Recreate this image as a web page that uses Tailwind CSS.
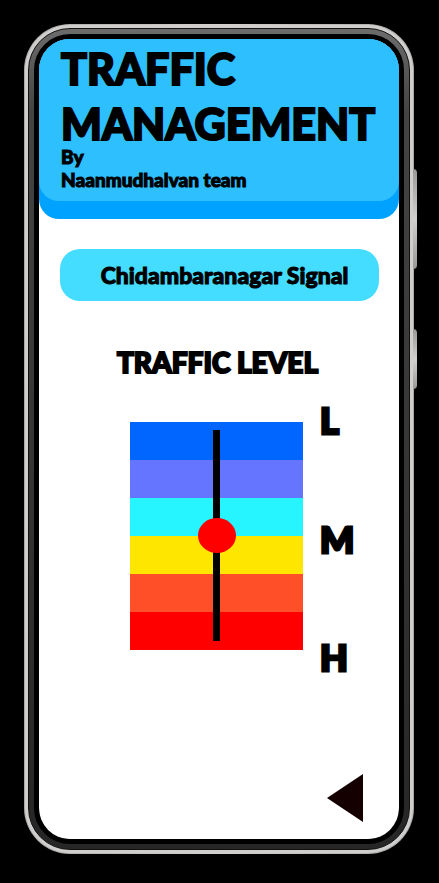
<!DOCTYPE html>
<html lang="en">
<head>
<meta charset="utf-8">
<meta name="viewport" content="width=device-width, initial-scale=1">
<title>Traffic Management</title>
<script src="https://cdn.jsdelivr.net/npm/@tailwindcss/browser@4"></script>
</head>
<body class="flex min-h-screen flex-col bg-black pt-6 pr-[25px] pb-[29px] pl-6 font-['Lato',sans-serif] font-black text-black">
  <div class="relative flex grow flex-col rounded-[46px] bg-linear-to-r from-[#a8a8a8] via-[#d4d2d0] to-[#a8a8a8] p-px">
    <span class="absolute top-[145px] -right-[3px] h-[100px] w-1 rounded-r-sm bg-linear-to-b from-[#999] via-[#d0d0d0] to-[#999]"></span>
    <span class="absolute top-[305px] -right-[3px] h-[60px] w-1 rounded-r-sm bg-linear-to-b from-[#999] via-[#d0d0d0] to-[#999]"></span>
    <div class="relative flex grow flex-col rounded-[45px] bg-[#d0cecd] p-[3px]">
      <div class="flex grow flex-col rounded-[42px] border border-[#111] bg-linear-to-b from-[#6c6c6c] via-[#444] via-10% to-[#262626] p-[5px]">
        <main class="flex grow flex-col overflow-hidden rounded-[36px] border-5 border-black bg-black">
          <div class="flex grow flex-col overflow-hidden rounded-[28px] bg-white">
            <header class="rounded-b-[20px] bg-[#00a2ff] pb-[18px]">
              <div class="rounded-b-[20px] bg-[#2ebfff] px-[22px] pt-[2px] pb-[10px]">
                <h1 class="text-[43px] leading-[55px] [-webkit-text-stroke:2px_#000]">TRAFFIC<br>MANAGEMENT</h1>
                <p class="-mt-[6px] text-[19px] leading-[23px] [-webkit-text-stroke:1px_#000]">By<br>Naanmudhalvan team</p>
              </div>
            </header>
            <section class="flex flex-col px-5 pt-[30px] pl-[21px]">
              <button type="button" class="h-[52px] rounded-[20px] bg-[#44ddff] pl-[10px] text-[23px] leading-[52px] whitespace-nowrap [-webkit-text-stroke:1px_#000]">Chidambaranagar Signal</button>
              <h2 class="mt-[41px] pr-1 text-center text-[28px] leading-10 [-webkit-text-stroke:2px_#000]">TRAFFIC LEVEL</h2>
            </section>
            <section class="mt-[18px] flex pl-[91px]">
              <div class="relative mt-[22px] h-[228px] w-[173px]">
                <div class="h-[38px] bg-[#0066ff]"></div>
                <div class="h-[38px] bg-[#6675ff]"></div>
                <div class="h-[38px] bg-[#26f4ff]"></div>
                <div class="h-[38px] bg-[#ffe600]"></div>
                <div class="h-[38px] bg-[#ff4f28]"></div>
                <div class="h-[38px] bg-[#ff0000]"></div>
                <input type="range" min="0" max="100" value="50" aria-label="Traffic level" class="absolute top-2 left-1/2 h-[211px] w-[38px] -translate-x-1/2 appearance-none bg-[linear-gradient(#000,#000)] bg-[length:7px_100%] bg-center bg-no-repeat [writing-mode:vertical-lr] [&::-webkit-slider-thumb]:h-[35px] [&::-webkit-slider-thumb]:w-[38px] [&::-webkit-slider-thumb]:appearance-none [&::-webkit-slider-thumb]:rounded-[50%] [&::-webkit-slider-thumb]:bg-[#ff0000]">
              </div>
              <div class="flex h-[277px] flex-col justify-between pl-[17px] text-[36px] leading-10 [-webkit-text-stroke:3px_#000]">
                <span>L</span>
                <span>M</span>
                <span>H</span>
              </div>
            </section>
            <div class="mt-auto flex justify-end pr-9 pb-[17px]">
              <button type="button" aria-label="Back">
                <svg class="block h-12 w-9" viewBox="0 0 36 48"><path d="M0 24 36 0V48Z" fill="#140000"/></svg>
              </button>
            </div>
          </div>
        </main>
      </div>
    </div>
  </div>
</body>
</html>
